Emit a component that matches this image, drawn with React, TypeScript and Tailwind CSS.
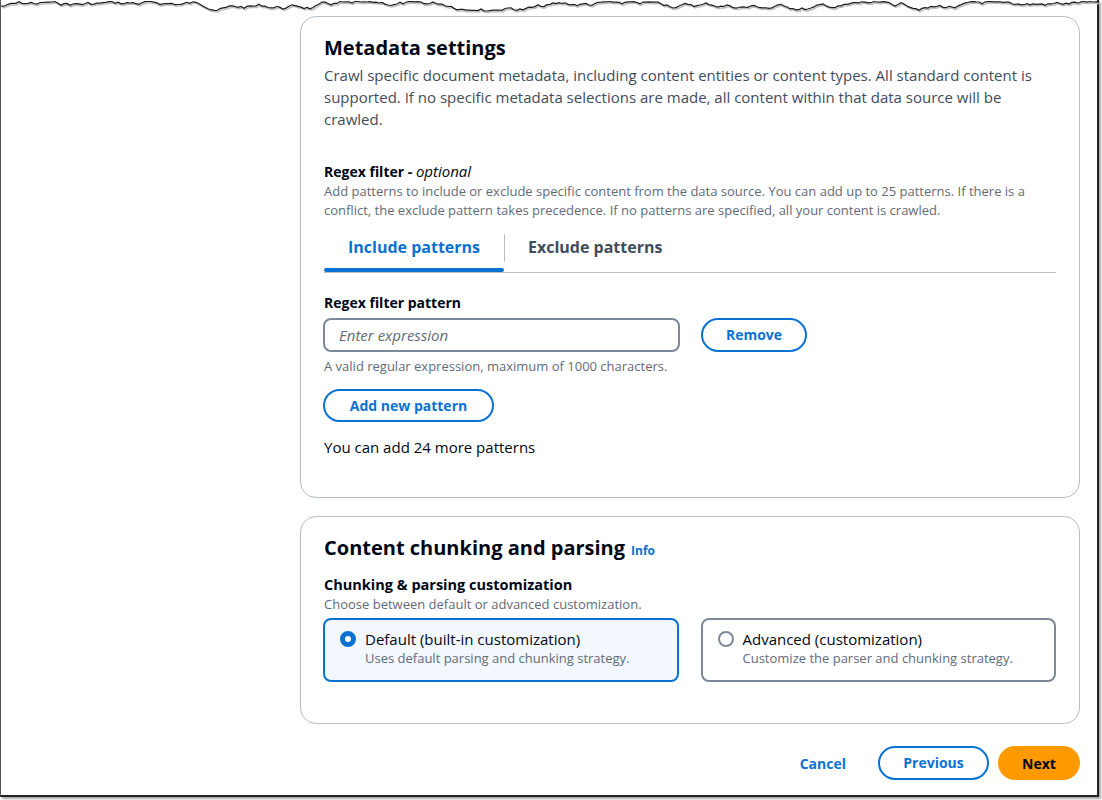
import * as React from "react";

const FONT = "font-['Open_Sans','Noto_Sans',sans-serif]";

function tornPoints(width: number) {
  // deterministic jitter so the torn edge looks the same every run
  let seed = 7;
  const rand = () => {
    seed = (seed * 9301 + 49297) % 233280;
    return seed / 233280;
  };
  const pts: string[] = [];
  let y = 6;
  for (let x = 0; x <= width; x += 3) {
    y += (rand() - 0.5) * 4;
    if (y < 1.5) y = 1.5 + rand();
    if (y > 11) y = 11 - rand();
    pts.push(`${x},${y.toFixed(1)}`);
  }
  return pts.join(" ");
}

function TornEdge() {
  const pts = React.useMemo(() => tornPoints(1098), []);
  return (
    <svg width="1098" height="16" className="block">
      <g transform="translate(1,1.5)">
        <polyline points={pts} fill="none" stroke="#bdbdbd" strokeWidth="1.5" />
      </g>
      <polyline points={pts} fill="none" stroke="#1a1a1a" strokeWidth="1.2" />
    </svg>
  );
}

function Card({ children, className }: { children: React.ReactNode; className?: string }) {
  return (
    <section
      className={"rounded-[16px] border border-[#b6bec9] bg-white px-[23px] pt-[19px] " + (className ?? "pb-[40px]")}
    >
      {children}
    </section>
  );
}

function PillButton({ children, className }: { children: React.ReactNode; className?: string }) {
  return (
    <button
      className={
        "rounded-full border-2 border-[#0972d3] text-[#0972d3] text-[14px] font-bold leading-[20px] flex items-center justify-center " +
        (className ?? "")
      }
    >
      {children}
    </button>
  );
}

function RadioTile({
  selected,
  label,
  hint,
}: {
  selected: boolean;
  label: string;
  hint: string;
}) {
  return (
    <div
      className={
        "flex-1 h-[64px] rounded-[8px] border-2 pl-[15px] pt-[9px] flex gap-[9px] " +
        (selected ? "border-[#0972d3] bg-[#f2f8fd]" : "border-[#7d8998] bg-white")
      }
    >
      <div className="pt-[2px]">
        {selected ? (
          <div className="w-[16px] h-[16px] rounded-full border-[5px] border-[#0972d3] bg-white" />
        ) : (
          <div className="w-[16px] h-[16px] rounded-full border-2 border-[#7d8998] bg-white" />
        )}
      </div>
      <div>
        <div className="text-[15px] leading-[20px] text-[#000716]">{label}</div>
        <div className="text-[13px] leading-[18px] text-[#5f6b7a]">{hint}</div>
      </div>
    </div>
  );
}

export default function App() {
  const [tab, setTab] = React.useState<"include" | "exclude">("include");

  return (
    <div className={`w-[1102px] h-[800px] bg-white overflow-hidden ${FONT}`}>
      <div className="w-[1099px] h-[797px] border-l border-l-[#555] border-r-2 border-r-[#222] border-b-2 border-b-[#222] shadow-[2px_2px_2px_rgba(0,0,0,0.35)] bg-white">
        <TornEdge />
        <div className="ml-[299px] w-[780px]">
          <Card>
            <h2 className="text-[20px] leading-[24px] font-bold text-[#000716]">Metadata settings</h2>
            <p className="mt-[4px] text-[15px] leading-[22px] text-[#414d5c]">
              Crawl specific document metadata, including content entities or content types. All standard content is
              supported. If no specific metadata selections are made, all content within that data source will be
              crawled.
            </p>

            <div className="mt-[31px] text-[14px] leading-[20px] text-[#000716]">
              <span className="font-bold">Regex filter - </span>
              <span className="italic text-[15px]">optional</span>
            </div>
            <p className="text-[13px] leading-[19px] text-[#5f6b7a] pr-[20px]">
              Add patterns to include or exclude specific content from the data source. You can add up to 25 patterns. If
              there is a conflict, the exclude pattern takes precedence. If no patterns are specified, all your content is
              crawled.
            </p>

            <div className="mt-[14px] flex border-b border-[#b6bec9]">
              <button
                onClick={() => setTab("include")}
                className="w-[180px] h-[38px] flex flex-col items-stretch"
              >
                <span
                  className={
                    "pt-[3px] text-[16px] leading-[20px] font-bold " +
                    (tab === "include" ? "text-[#0972d3]" : "text-[#414d5c]")
                  }
                >
                  Include patterns
                </span>
                <span
                  className={"mt-auto h-[4px] rounded-full " + (tab === "include" ? "bg-[#0972d3]" : "bg-transparent")}
                />
              </button>
              <div className="w-px h-[28px] bg-[#b6bec9]" />
              <button
                onClick={() => setTab("exclude")}
                className="h-[38px] pl-[23px] pr-[22px] flex flex-col items-stretch"
              >
                <span
                  className={
                    "pt-[3px] text-[16px] leading-[20px] font-bold " +
                    (tab === "exclude" ? "text-[#0972d3]" : "text-[#414d5c]")
                  }
                >
                  Exclude patterns
                </span>
                <span
                  className={"mt-auto h-[4px] rounded-full " + (tab === "exclude" ? "bg-[#0972d3]" : "bg-transparent")}
                />
              </button>
            </div>

            <div className="mt-[20px] text-[14px] leading-[20px] font-bold text-[#000716]">Regex filter pattern</div>
            <div className="mt-[5px] -ml-px flex items-center gap-[21px]">
              <input
                placeholder="Enter expression"
                className="w-[357px] h-[34px] rounded-[8px] border-2 border-[#7d8998] px-[14px] text-[15px] italic placeholder:text-[#5f6b7a] outline-none"
              />
              <PillButton className="w-[106px] h-[34px]">Remove</PillButton>
            </div>
            <div className="mt-[6px] text-[13px] leading-[16px] text-[#5f6b7a]">
              A valid regular expression, maximum of 1000 characters.
            </div>
            <PillButton className="mt-[15px] -ml-px w-[171px] h-[33px]">Add new pattern</PillButton>
            <div className="mt-[15px] text-[15px] leading-[20px] text-[#000716]">You can add 24 more patterns</div>
          </Card>

          <div className="mt-[18px]">
            <Card className="pb-[41px]">
              <div className="flex items-baseline gap-[6px]">
                <h2 className="text-[20px] leading-[24px] font-bold text-[#000716]">Content chunking and parsing</h2>
                <span className="text-[12px] font-bold text-[#0972d3]">Info</span>
              </div>
              <div className="mt-[15px] text-[14.5px] leading-[20px] font-bold text-[#000716]">
                Chunking &amp; parsing customization
              </div>
              <div className="text-[13px] leading-[18px] text-[#5f6b7a]">
                Choose between default or advanced customization.
              </div>
              <div className="mt-[5px] -ml-px flex gap-[22px]">
                <RadioTile
                  selected
                  label="Default (built-in customization)"
                  hint="Uses default parsing and chunking strategy."
                />
                <RadioTile
                  selected={false}
                  label="Advanced (customization)"
                  hint="Customize the parser and chunking strategy."
                />
              </div>
            </Card>
          </div>

          <div className="mt-[22px] flex justify-end items-center">
            <button className="px-[20px] h-[34px] text-[14px] font-bold text-[#0972d3]">Cancel</button>
            <PillButton className="ml-[12px] w-[111px] h-[34px]">Previous</PillButton>
            <button className="ml-[9px] w-[82px] h-[34px] rounded-full bg-[#ff9900] text-[14px] font-bold text-[#000716]">
              Next
            </button>
          </div>
        </div>
      </div>
    </div>
  );
}
